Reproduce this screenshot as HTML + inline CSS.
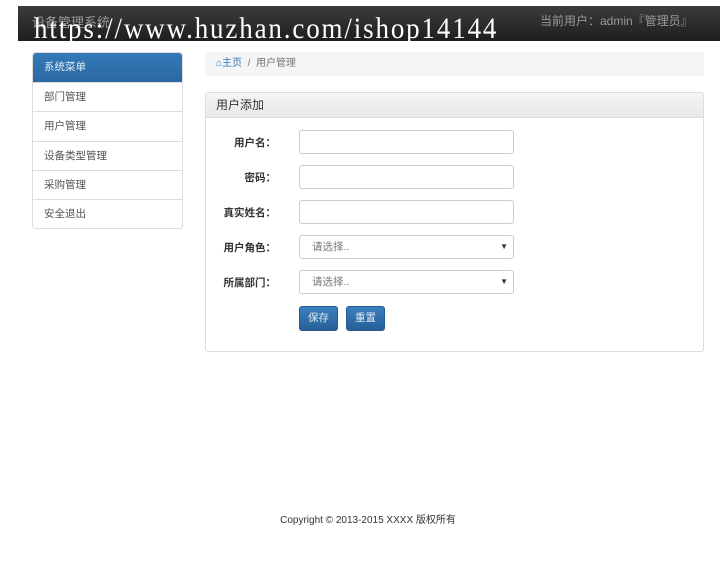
<!DOCTYPE html>
<html><head><meta charset="utf-8"><style>
*{box-sizing:border-box;margin:0;padding:0}
body{width:726px;height:570px;background:#fff;font-family:"Liberation Sans","Noto Sans CJK SC",sans-serif;font-size:11px;color:#333;position:relative;overflow:hidden}
.nav{position:absolute;left:18px;top:6px;width:702px;height:35px;background:linear-gradient(#3c3c3c,#1e1e1e)}
.brand{position:absolute;left:32px;top:12px;color:#999;font-size:13px}
.url{position:absolute;left:34px;top:12px;font-family:"Liberation Serif",serif;font-size:27px;color:#fff;white-space:nowrap;letter-spacing:1.85px;transform:scaleY(1.08);transform-origin:0 0}
.user{position:absolute;left:540px;top:12px;color:#999;font-size:12px}
.side{position:absolute;left:32px;top:52px;width:151px;border:1px solid #ddd;border-radius:3px}
.side div{height:29.3px;line-height:29px;padding-left:11px;border-top:1px solid #ddd;color:#555;font-size:10.5px}
.side .h{background:linear-gradient(#337ab7,#2b68a3);color:#e0ecf7;border-top:none;height:29px;border-radius:3px 3px 0 0}
.bc{position:absolute;left:205px;top:52px;width:499px;height:24px;background:#f5f5f5;border-radius:3px;line-height:24px;padding-left:11px;font-size:10px;color:#777}
.bc a{color:#337ab7}
.panel{position:absolute;left:205px;top:92px;width:499px;height:260px;border:1px solid #ddd;border-radius:3px}
.ph{height:25px;background:linear-gradient(#f5f5f5,#e8e8e8);border-bottom:1px solid #ddd;line-height:25px;padding-left:10px;font-size:12px;color:#333}
.lab{position:absolute;width:70px;text-align:right;left:0;font-weight:bold;font-size:10.5px;color:#333}
.in{position:absolute;left:93px;width:215px;height:24px;border:1px solid #ccc;border-radius:3px;background:#fff;font-size:10.5px;color:#777;line-height:22px;padding-left:12px}
.in span{position:absolute;right:5px;color:#333;font-size:8px}
.btn{position:absolute;top:213px;width:39px;height:25px;background:linear-gradient(#3a7fbf,#275f97);border:1px solid #245a8e;border-radius:3px;color:#dfe9f3;text-align:center;line-height:23px;font-size:10.5px}
.foot{position:absolute;top:511px;left:0;width:736px;text-align:center;font-size:10px;color:#333}
</style></head><body>
<div class="nav"></div>
<div class="brand">设备管理系统</div>
<div class="url">https://www.huzhan.com/ishop14144</div>
<div class="user">当前用户：admin『管理员』</div>
<div class="side"><div class="h">系统菜单</div><div>部门管理</div><div>用户管理</div><div>设备类型管理</div><div>采购管理</div><div>安全退出</div></div>
<div class="bc"><a>&#8962;主页</a> &nbsp;/&nbsp; 用户管理</div>
<div class="panel"><div class="ph">用户添加</div>
<div class="lab" style="top:42px">用户名：</div><div class="in" style="top:37px"></div>
<div class="lab" style="top:77px">密码：</div><div class="in" style="top:72px"></div>
<div class="lab" style="top:112px">真实姓名：</div><div class="in" style="top:107px"></div>
<div class="lab" style="top:147px">用户角色：</div><div class="in" style="top:142px">请选择..<span>▼</span></div>
<div class="lab" style="top:182px">所属部门：</div><div class="in" style="top:177px">请选择..<span>▼</span></div>
<div class="btn" style="left:93px">保存</div><div class="btn" style="left:140px">重置</div>
</div>
<div class="foot">Copyright © 2013-2015 XXXX 版权所有</div>
</body></html>
